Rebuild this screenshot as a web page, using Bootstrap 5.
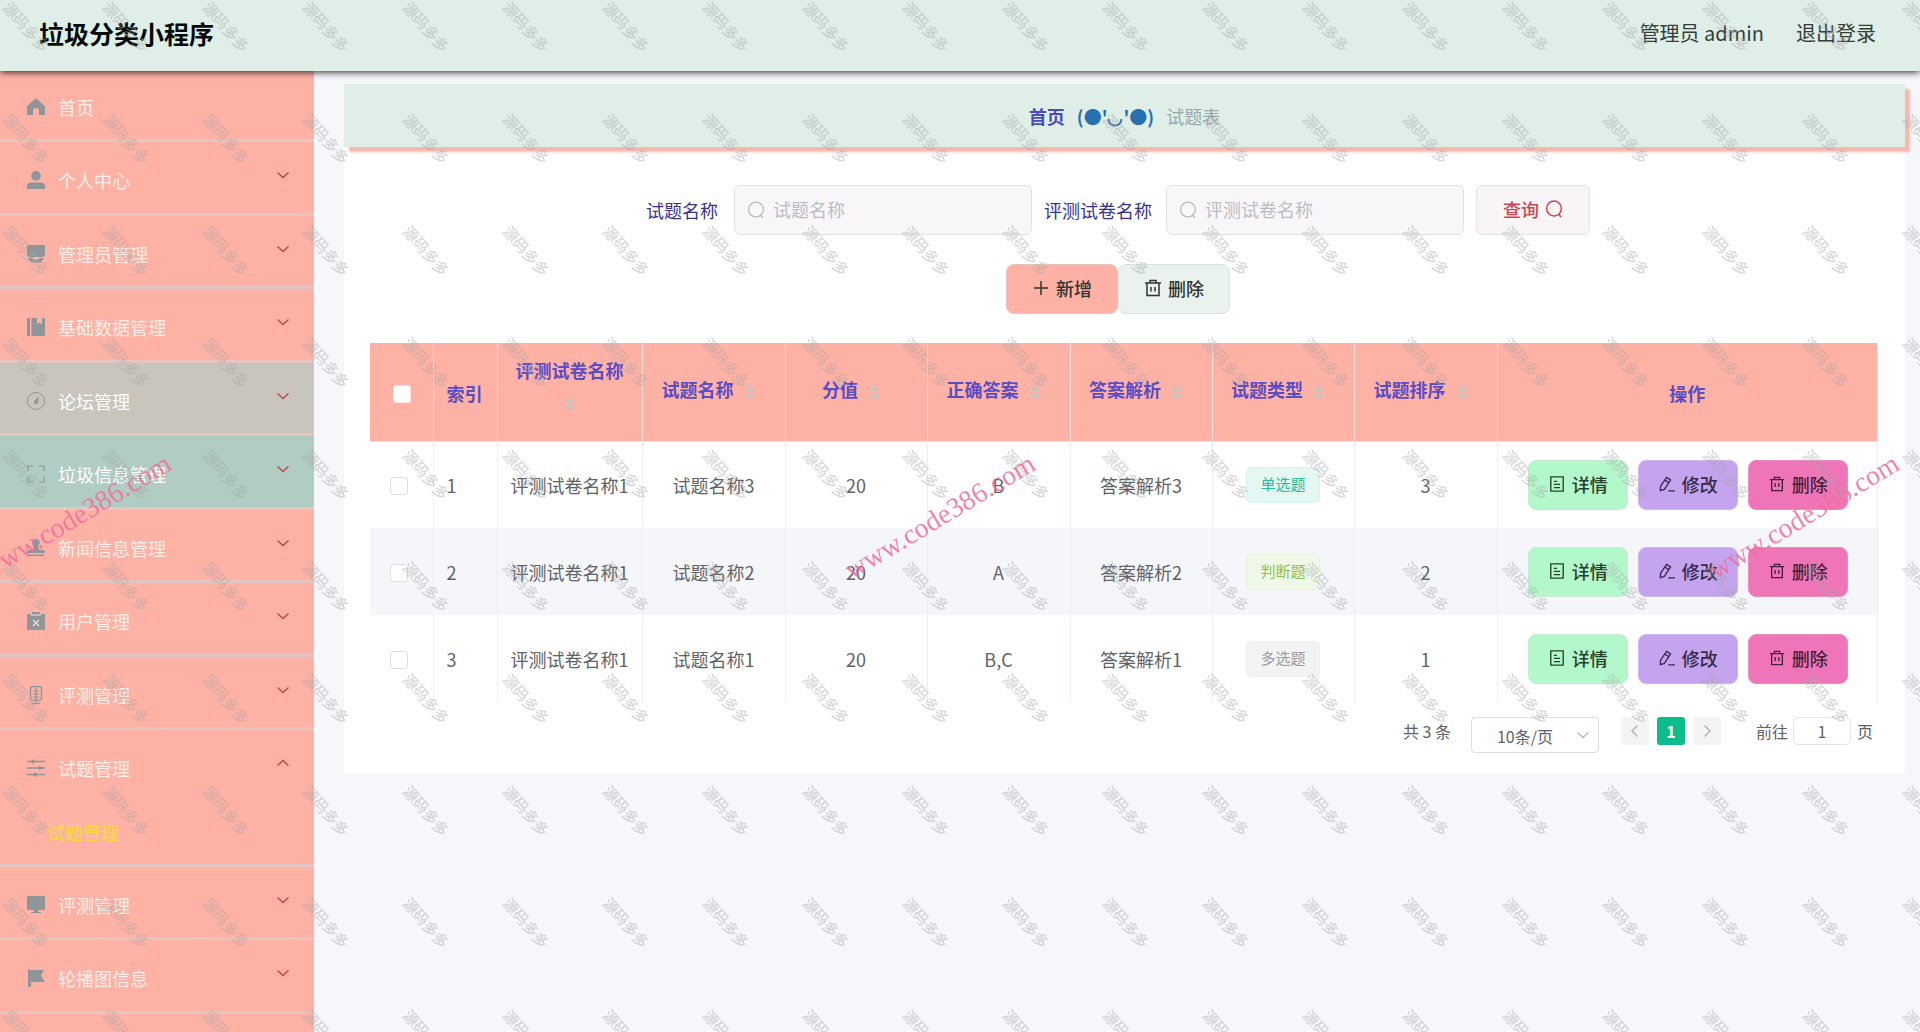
<!DOCTYPE html>
<html lang="zh-CN">
<head>
<meta charset="utf-8">
<meta name="viewport" content="width=device-width, initial-scale=1">
<title>垃圾分类小程序</title>
<link href="https://cdn.jsdelivr.net/npm/bootstrap@5.3.0/dist/css/bootstrap.min.css" rel="stylesheet">
<style>
  :root { --salmon: #feb1a5; --mint: #dfeee7; --ink: #606266; --indigo: #5a4cc4; }
  body { font-family: "Noto Sans CJK SC", "Noto Sans", sans-serif; font-size: 18px; line-height: 24px; color: var(--ink); background: #f5f7fa; overflow: hidden; }
  svg.ico { width: 18px; height: 18px; fill: none; stroke: currentColor; stroke-width: 1.6; flex: none; }
  a { text-decoration: none; }

  .topbar { height: 71px; padding: 0 44px 6px 39px; background: var(--mint); box-shadow: 0 1px 7px rgba(0,0,0,.85); z-index: 5; font-size: 20px; color: #333f3b; }
  .topbar .brand { font-size: 25px; font-weight: 700; color: #050a08; }
  .topbar .account { gap: 32px; }
  .topbar a { color: inherit; }

  .shell { height: calc(100vh - 71px); }
  .side { width: 314px; flex: none; background: var(--salmon); }
  .menu-item { height: 74px; border-bottom: 3px solid #e3c6bf; }
  .menu-item:nth-child(odd) { height: 73px; }
  .menu-item:first-child { height: 71px; }
  .menu-item.opened { height: 137px; }
  .menu-item a { color: #fdeeea; height: 70px; padding: 6px 25px 0 27px; gap: 13px; }
  .menu-item:first-child a { padding-top: 2px; }
  .menu-item a .ico { color: #8e9699; }
  .menu-item a .caret-ico { width: 12px; height: 12px; color: #bd4448; margin: -11px 0 0 auto; stroke-width: 1.8; }
  .menu-item.hovered { background: #c9c5bd; }
  .menu-item.picked { background: #b0ccc3; }
  .menu-item.hovered a, .menu-item.picked a { color: #fff; }
  .menu-item a.sub-link { height: 64px; padding: 0 0 0 47px; color: #fbdc40; }

  .main-area { padding: 13px 15px 0 30px; }
  .panel { background: #fff; padding-bottom: 20px; }
  .crumbs { height: 63px; gap: 12px; background: var(--mint); box-shadow: 5px 5px 2px #f6b9b0; }
  .crumbs a { color: #4a4bbd; font-weight: 700; }
  .crumbs .face { color: #2a6fae; font-weight: 700; }
  .crumbs .here { color: #97a8ac; }

  .panel-body { padding: 38px 27px 0 26px; }
  .query { padding-right: 12px; }
  .query + .query { margin-top: 29px; }
  .query label { color: #38318c; }
  .query .field { width: 298px; }
  .query .field input { width: 100%; height: 50px; border: 1px solid #e4e1e4; border-radius: 6px; background: #f8f6f9; padding: 0 12px 3px 38px; outline: 0; color: var(--ink); }
  .query .field input::placeholder { color: #bcbcc2; opacity: 1; }
  .query .field .ico { position: absolute; left: 13px; top: 16px; color: #b8b8be; stroke-width: 1.2; }
  .query .label-second { margin: 0 14px 0 12px; }
  .act { height: 50px; border: 1px solid transparent; border-radius: 8px; padding: 0 0 2px; gap: 6px; color: #333; font-weight: 500; font-size: 18px; line-height: 24px; }
  .act .ico { stroke-width: 1.5; }
  .act-query { width: 114px; margin-left: 12px; background: #f9f5f6; border-color: #e6e2e4; color: #cf4450; border-radius: 6px; }
  .act-add, .act-del { width: 112px; }
  .act-add { background: var(--salmon); border-color: #e9c4bd; }
  .act-del { background: #e9f2ec; border-color: #d9e2dc; }

  .grid-table { table-layout: fixed; margin: 29px 0 0; color: var(--ink); border-collapse: collapse; width: 100%; }
  .grid-table th, .grid-table td { border-right: 1px solid #ebeef5; text-align: center; padding: 0; vertical-align: middle; }
  .grid-table th { height: 98px; background: var(--salmon); color: var(--indigo); font-weight: 700; border-right-color: #fbdcd6; border-bottom: 1px solid #fbdcd6; padding-top: 2px; }
  .grid-table td { height: 87px; }
  .grid-table tbody tr:nth-child(2) { background: #f5f6fa; }
  .grid-table .lead-cell { text-align: left; padding-left: 13px; }
  .head-cell { padding-bottom: 2px; }
  .head-cell.wrapped { padding-bottom: 6px; }
  .wrapped .sort-ico { margin-top: 5px; }
  .sort-ico { width: 32px; height: 34px; fill: #cfc0bd; display: inline-block; vertical-align: middle; }
  .tick { appearance: none; display: block; width: 18px; height: 18px; border: 1px solid #dcdfe6; border-radius: 3px; background: #fff; margin: 2px 0 0 20px; }
  th .tick { margin-left: 23px; border-color: #fde6e2; }
  .kind { display: inline-block; width: 74px; height: 36px; line-height: 32px; font-size: 15px; border: 1px solid; border-radius: 5px; }
  .kind-a { color: #2bbd98; background: #e4f7f2; border-color: #dbf4ed; }
  .kind-b { color: #86c25c; background: #f0f9e8; border-color: #e6f3dc; }
  .kind-c { color: #9a9ca1; background: #f2f3f3; border-color: #eeeff0; }
  .acts { gap: 10px; padding-left: 2px; }
  .row-act { width: 100px; gap: 7px; }
  .row-act .ico { width: 16px; height: 16px; }
  .act-view { background: #b3f8cb; border-color: #c6ebd2; color: #27402f; }
  .act-edit { background: #c4a4ee; border-color: #cdb7ea; color: #352a4a; }
  .act-drop { background: #f075b8; border-color: #e98dbf; color: #46203a; }

  .pager { font-size: 16px; padding: 15px 5px 0 0; }
  .pager .total { margin: 2px 20px 0 0; }
  .pager select { width: 128px; height: 36px; appearance: none; border: 1px solid #dcdfe6; border-radius: 4px; background: #fff; color: var(--ink); padding: 2px 0 0 25px; }
  .pager .ico { width: 14px; height: 14px; color: #b4b8bf; }
  .pager .sel-ico { position: absolute; right: 10px; top: 11px; width: 12px; }
  .pg { width: 28px; height: 28px; border: 0; border-radius: 3px; background: #f4f4f5; padding: 0; }
  .pg-on { background: #0bbd8b; color: #fff; font-weight: 700; line-height: 28px; }
  .pager .jump { margin: 2px 5px 0 35px; }
  .pager .sizes { margin-right: 22px; }
  .pager input { width: 58px; height: 28px; border: 1px solid #e1e4ea; border-radius: 5px; text-align: center; color: var(--ink); padding: 0; margin-right: 6px; }
  .pager .unit { margin-top: 2px; }

  .stamp { position: fixed; inset: 0; width: 100%; height: 100%; pointer-events: none; z-index: 20; }
  .stamp-tile { font: 300 15px "Noto Sans CJK SC", sans-serif; fill: rgba(255,255,255,.3); stroke: rgba(120,125,125,.36); stroke-width: .5; }
  .stamp-site { font: 28px "Liberation Serif", serif; fill: #f06f9c; fill-opacity: .85; }
</style>
</head>
<body>
<svg class="d-none">
  <symbol id="i-home" viewBox="0 0 18 18"><path fill="currentColor" stroke="none" d="M0 8.2 7.6 1.2Q9 0 10.4 1.2L18 8.2V17H12V12.5Q12 10 9 10T6 12.5V17H0Z"/></symbol>
  <symbol id="i-user" viewBox="0 0 18 18"><g fill="currentColor" stroke="none"><circle cx="9" cy="4.8" r="4.8"/><path d="M0 18V15.5Q0 11.5 4 11.5H14Q18 11.5 18 15.5V18Z"/></g></symbol>
  <symbol id="i-admin" viewBox="0 0 18 18"><g fill="currentColor" stroke="none"><path d="M1.5 0H16.5Q18 0 18 1.5V9Q18 12 14.5 12H3.5Q0 12 0 9V1.5Q0 0 1.5 0Z"/><path d="M1 13H5Q6 15 9 15T13 13H17L15 16Q14 17.5 12 17.5H6Q4 17.5 3 16Z"/></g></symbol>
  <symbol id="i-book" viewBox="0 0 18 18"><g fill="currentColor" stroke="none"><path d="M0 0H3V18H0Z"/><path d="M4.5 0H10V6.5L12.5 4.5 15 6.5V0H18V18H4.5Z"/></g></symbol>
  <symbol id="i-gauge" viewBox="0 0 18 18"><circle cx="9" cy="9" r="8.500" stroke-width="1"/><path fill="currentColor" stroke="none" d="M12 4.2 11 10.5A2 2 0 1 1 7.6 8.8Z"/></symbol>
  <symbol id="i-full" viewBox="0 0 18 18"><path stroke-width="1.2" d="M1 6V1H6M12 1H17V6M17 12V17H12M6 17H1V12"/></symbol>
  <symbol id="i-stamp" viewBox="0 0 18 18"><path fill="currentColor" stroke="none" d="M6.5 9Q7.5 7.5 6 5.5A3.6 3.6 0 1 1 12 5.5Q10.500 7.500 11.500 9V11H16Q18 11 18 14H0Q0 11 2 11H6.500ZM1 15.500H17V17H1Z"/></symbol>
  <symbol id="i-clip" viewBox="0 0 18 18"><path fill="currentColor" stroke="none" d="M0 2H5V0H13V2H18V18H0Z"/><path stroke="#fde0da" stroke-width="1.1" d="M6 8 12 14M12 8 6 14M4 3H14"/></symbol>
  <symbol id="i-mic" viewBox="0 0 18 18"><rect x="3.500" y="0.600" width="11" height="13.500" rx="2" stroke-width="1.4"/><path stroke-width="1.2" d="M9 2V17M5 17.400H13M6 5H12M6 8H12M6 11H12"/></symbol>
  <symbol id="i-sliders" viewBox="0 0 18 18"><path stroke-width="1.4" d="M0 2.500H18M0 9H18M0 15.500H18"/><path fill="currentColor" stroke="none" d="M2.500 2.500 7 0V5ZM16.500 9 12 6.500V11.500ZM5 15.500 9.500 13V18Z"/></symbol>
  <symbol id="i-screen" viewBox="0 0 18 18"><path fill="currentColor" stroke="none" d="M1 0H17Q18 0 18 1V13Q18 14 17 14H0V1Q0 0 1 0ZM7 14H11V16H14V17H4V16H7Z"/></symbol>
  <symbol id="i-flag" viewBox="0 0 18 18"><path fill="currentColor" stroke="none" d="M1 0H2.500V1H17L14 6.500 18 13H4V18H1Z"/></symbol>
  <symbol id="i-down" viewBox="0 0 12 12"><path d="M.5 3.500 6 8.500 11.500 3.500" stroke-width="1.300"/></symbol>
  <symbol id="i-up" viewBox="0 0 12 12"><path d="M.5 8.500 6 3.500 11.500 8.500" stroke-width="1.300"/></symbol>
  <symbol id="i-left" viewBox="0 0 14 14"><path d="M9.500 1.500 4 7 9.500 12.500"/></symbol>
  <symbol id="i-right" viewBox="0 0 14 14"><path d="M4.500 1.500 10 7 4.500 12.500"/></symbol>
  <symbol id="i-search" viewBox="0 0 18 18"><circle cx="9" cy="8.500" r="7.400"/><path d="M13.500 14 16 17"/></symbol>
  <symbol id="i-plus" viewBox="0 0 18 18"><path d="M9 2V16M2 9H16"/></symbol>
  <symbol id="i-trash" viewBox="0 0 18 18"><path d="M1 4H17M6 4V1.500H12V4M3 4V16.500H15V4M7 8V12.500M11 8V12.500"/></symbol>
  <symbol id="i-doc" viewBox="0 0 18 18"><path d="M2 1H16V17H2ZM5.500 6H9M5.500 9.500H12.500M5.500 13H12.500"/></symbol>
  <symbol id="i-pen" viewBox="0 0 18 18"><path d="M8.500 1.500 13 4.500 6 15 1.500 16.500 1.800 11.500ZM6.500 4.500 11 7.500M10.500 16.800H18"/></symbol>
  <symbol id="i-sort" viewBox="0 0 32 34"><path stroke="none" d="M16 10 21 16H11ZM16 25 21 19H11Z"/></symbol>
</svg>

<header class="topbar position-relative d-flex align-items-center justify-content-between">
  <div class="brand">垃圾分类小程序</div>
  <div class="account d-flex"><span>管理员 admin</span><a href="#">退出登录</a></div>
</header>

<div class="shell d-flex">
  <nav class="side overflow-hidden">
    <ul class="list-unstyled m-0">
      <li class="menu-item"><a href="#" class="d-flex align-items-center"><svg class="ico"><use href="#i-home"/></svg>首页</a></li>
      <li class="menu-item"><a href="#" class="d-flex align-items-center"><svg class="ico"><use href="#i-user"/></svg>个人中心<svg class="ico caret-ico"><use href="#i-down"/></svg></a></li>
      <li class="menu-item"><a href="#" class="d-flex align-items-center"><svg class="ico"><use href="#i-admin"/></svg>管理员管理<svg class="ico caret-ico"><use href="#i-down"/></svg></a></li>
      <li class="menu-item"><a href="#" class="d-flex align-items-center"><svg class="ico"><use href="#i-book"/></svg>基础数据管理<svg class="ico caret-ico"><use href="#i-down"/></svg></a></li>
      <li class="menu-item hovered"><a href="#" class="d-flex align-items-center"><svg class="ico"><use href="#i-gauge"/></svg>论坛管理<svg class="ico caret-ico"><use href="#i-down"/></svg></a></li>
      <li class="menu-item picked"><a href="#" class="d-flex align-items-center"><svg class="ico"><use href="#i-full"/></svg>垃圾信息管理<svg class="ico caret-ico"><use href="#i-down"/></svg></a></li>
      <li class="menu-item"><a href="#" class="d-flex align-items-center"><svg class="ico"><use href="#i-stamp"/></svg>新闻信息管理<svg class="ico caret-ico"><use href="#i-down"/></svg></a></li>
      <li class="menu-item"><a href="#" class="d-flex align-items-center"><svg class="ico"><use href="#i-clip"/></svg>用户管理<svg class="ico caret-ico"><use href="#i-down"/></svg></a></li>
      <li class="menu-item"><a href="#" class="d-flex align-items-center"><svg class="ico"><use href="#i-mic"/></svg>评测管理<svg class="ico caret-ico"><use href="#i-down"/></svg></a></li>
      <li class="menu-item opened"><a href="#" class="d-flex align-items-center"><svg class="ico"><use href="#i-sliders"/></svg>试题管理<svg class="ico caret-ico"><use href="#i-up"/></svg></a>
        <a href="#" class="sub-link d-flex align-items-center">试题管理</a></li>
      <li class="menu-item"><a href="#" class="d-flex align-items-center"><svg class="ico"><use href="#i-screen"/></svg>评测管理<svg class="ico caret-ico"><use href="#i-down"/></svg></a></li>
      <li class="menu-item"><a href="#" class="d-flex align-items-center"><svg class="ico"><use href="#i-flag"/></svg>轮播图信息<svg class="ico caret-ico"><use href="#i-down"/></svg></a></li>
    </ul>
  </nav>

  <main class="main-area flex-fill">
    <div class="panel">
      <div class="crumbs d-flex align-items-center justify-content-center">
        <a href="#">首页</a><span class="face">(●'◡'●)</span><span class="here">试题表</span>
      </div>
      <div class="panel-body">
        <form class="query d-flex align-items-center justify-content-center">
          <label for="q-name" class="me-3">试题名称</label>
          <div class="field position-relative"><svg class="ico"><use href="#i-search"/></svg><input id="q-name" type="text" placeholder="试题名称"></div>
          <label for="q-paper" class="label-second">评测试卷名称</label>
          <div class="field position-relative"><svg class="ico"><use href="#i-search"/></svg><input id="q-paper" type="text" placeholder="评测试卷名称"></div>
          <button type="button" class="act act-query d-flex align-items-center justify-content-center">查询<svg class="ico"><use href="#i-search"/></svg></button>
        </form>
        <div class="query d-flex justify-content-center">
          <button type="button" class="act act-add d-flex align-items-center justify-content-center"><svg class="ico"><use href="#i-plus"/></svg>新增</button>
          <button type="button" class="act act-del d-flex align-items-center justify-content-center"><svg class="ico"><use href="#i-trash"/></svg>删除</button>
        </div>

        <table class="grid-table">
          <colgroup><col style="width:63px"><col style="width:64px"><col style="width:145px"><col style="width:143px"><col style="width:142px"><col style="width:143px"><col style="width:142px"><col style="width:142px"><col style="width:143px"><col></colgroup>
          <thead><tr>
            <th><input type="checkbox" class="tick" aria-label="全选"></th>
            <th class="lead-cell">索引</th>
            <th><div class="head-cell wrapped">评测试卷名称<br><svg class="sort-ico"><use href="#i-sort"/></svg></div></th>
            <th><div class="head-cell">试题名称<svg class="sort-ico"><use href="#i-sort"/></svg></div></th>
            <th><div class="head-cell">分值<svg class="sort-ico"><use href="#i-sort"/></svg></div></th>
            <th><div class="head-cell">正确答案<svg class="sort-ico"><use href="#i-sort"/></svg></div></th>
            <th><div class="head-cell">答案解析<svg class="sort-ico"><use href="#i-sort"/></svg></div></th>
            <th><div class="head-cell">试题类型<svg class="sort-ico"><use href="#i-sort"/></svg></div></th>
            <th><div class="head-cell">试题排序<svg class="sort-ico"><use href="#i-sort"/></svg></div></th>
            <th>操作</th>
          </tr></thead>
          <tbody>
            <tr>
              <td><input type="checkbox" class="tick" aria-label="选择 1"></td><td class="lead-cell">1</td><td>评测试卷名称1</td><td>试题名称3</td><td>20</td><td>B</td><td>答案解析3</td><td><span class="kind kind-a">单选题</span></td><td>3</td>
              <td><div class="acts d-flex justify-content-center"><button type="button" class="act row-act act-view d-flex align-items-center justify-content-center"><svg class="ico"><use href="#i-doc"/></svg>详情</button><button type="button" class="act row-act act-edit d-flex align-items-center justify-content-center"><svg class="ico"><use href="#i-pen"/></svg>修改</button><button type="button" class="act row-act act-drop d-flex align-items-center justify-content-center"><svg class="ico"><use href="#i-trash"/></svg>删除</button></div></td>
            </tr>
            <tr>
              <td><input type="checkbox" class="tick" aria-label="选择 2"></td><td class="lead-cell">2</td><td>评测试卷名称1</td><td>试题名称2</td><td>20</td><td>A</td><td>答案解析2</td><td><span class="kind kind-b">判断题</span></td><td>2</td>
              <td><div class="acts d-flex justify-content-center"><button type="button" class="act row-act act-view d-flex align-items-center justify-content-center"><svg class="ico"><use href="#i-doc"/></svg>详情</button><button type="button" class="act row-act act-edit d-flex align-items-center justify-content-center"><svg class="ico"><use href="#i-pen"/></svg>修改</button><button type="button" class="act row-act act-drop d-flex align-items-center justify-content-center"><svg class="ico"><use href="#i-trash"/></svg>删除</button></div></td>
            </tr>
            <tr>
              <td><input type="checkbox" class="tick" aria-label="选择 3"></td><td class="lead-cell">3</td><td>评测试卷名称1</td><td>试题名称1</td><td>20</td><td>B,C</td><td>答案解析1</td><td><span class="kind kind-c">多选题</span></td><td>1</td>
              <td><div class="acts d-flex justify-content-center"><button type="button" class="act row-act act-view d-flex align-items-center justify-content-center"><svg class="ico"><use href="#i-doc"/></svg>详情</button><button type="button" class="act row-act act-edit d-flex align-items-center justify-content-center"><svg class="ico"><use href="#i-pen"/></svg>修改</button><button type="button" class="act row-act act-drop d-flex align-items-center justify-content-center"><svg class="ico"><use href="#i-trash"/></svg>删除</button></div></td>
            </tr>
          </tbody>
        </table>

        <div class="pager d-flex justify-content-end align-items-start">
          <span class="total">共 3 条</span>
          <div class="sizes position-relative"><select aria-label="每页条数"><option>10条/页</option></select><svg class="ico sel-ico"><use href="#i-down"/></svg></div>
          <div class="d-flex gap-2">
            <button type="button" class="pg d-flex align-items-center justify-content-center" aria-label="上一页"><svg class="ico"><use href="#i-left"/></svg></button>
            <button type="button" class="pg pg-on">1</button>
            <button type="button" class="pg d-flex align-items-center justify-content-center" aria-label="下一页"><svg class="ico"><use href="#i-right"/></svg></button>
          </div>
          <label for="pg-jump" class="jump">前往</label>
          <input id="pg-jump" type="text" value="1">
          <span class="unit">页</span>
        </div>
      </div>
    </div>
  </main>
</div>

<svg class="stamp" aria-hidden="true">
  <defs><pattern id="tile" width="100" height="112" patternUnits="userSpaceOnUse"><text class="stamp-tile" transform="translate(2 8) rotate(49)">源码多多</text></pattern></defs>
  <rect width="100%" height="100%" fill="url(#tile)"/>
  <text class="stamp-site" transform="translate(-12 580) rotate(-31)">www.code386.com</text>
  <text class="stamp-site" transform="translate(852 580) rotate(-31)">www.code386.com</text>
  <text class="stamp-site" transform="translate(1716 580) rotate(-31)">www.code386.com</text>
</svg>
<script src="https://cdn.jsdelivr.net/npm/bootstrap@5.3.0/dist/js/bootstrap.bundle.min.js"></script>
</body>
</html>
